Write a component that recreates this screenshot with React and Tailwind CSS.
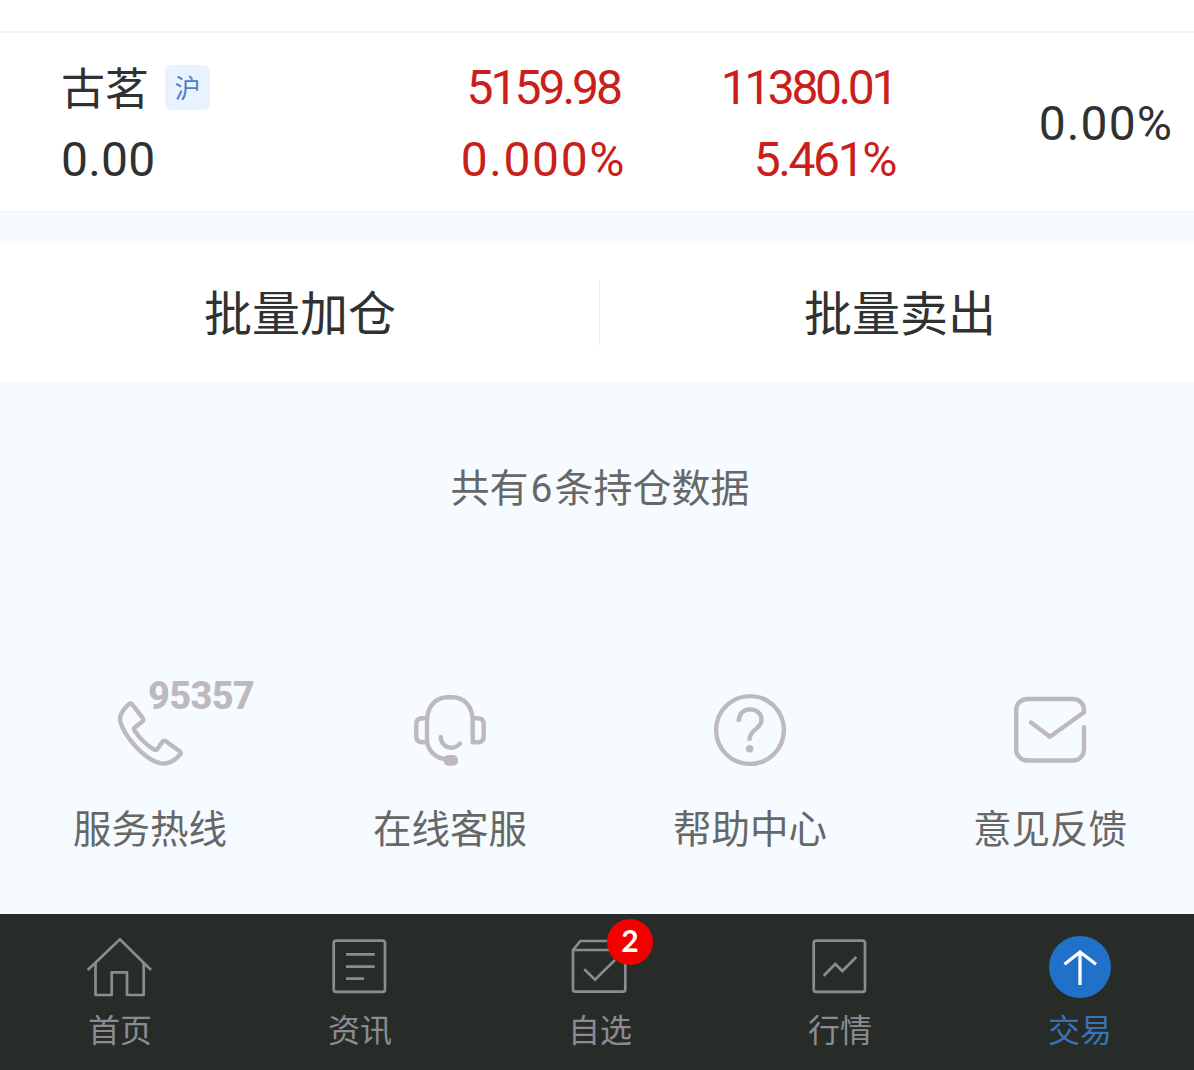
const services = [
	{ label: "服务热线", icon: <PhoneIcon />, tag: "95357" },
	{ label: "在线客服", icon: <HeadsetIcon /> },
	{ label: "帮助中心", icon: <HelpIcon /> },
	{ label: "意见反馈", icon: <MailIcon /> },
]

const tabs = [
	{ label: "首页", icon: <HomeIcon /> },
	{ label: "资讯", icon: <NewsIcon /> },
	{ label: "自选", icon: <WatchlistIcon />, badge: 2 },
	{ label: "行情", icon: <MarketIcon /> },
	{ label: "交易", icon: <TradeIcon />, active: true },
]

function ServiceSvg({ children }) {
	return (
		<svg
			className="w-24 h-24"
			viewBox="0 0 96 96"
			fill="none"
			stroke="#bdb9bd"
			strokeWidth="4.4"
			strokeLinecap="round"
			strokeLinejoin="round"
		>
			{children}
		</svg>
	)
}

function PhoneIcon() {
	return (
		<ServiceSvg>
			<path d="M26.8 22.2Q28.6 20.4 30.2 22.4L40.8 36.2Q42 38 40.4 39.4L33 45.2Q31.4 46.4 32.4 48.4C38 57 46 64 52.2 67.6Q54.4 68.6 55.8 66.6L60.4 59.8Q61.8 58 63.8 59.2L77.6 69.2Q79.6 71 78 72.8C72 79.4 66 83 57.6 81.2 40 76 21 52 18 38.4 17.4 32 21.6 27.4 26.8 22.2Z" />
		</ServiceSvg>
	)
}

function HeadsetIcon() {
	return (
		<ServiceSvg>
			<path d="M46 77.3C33 77 25 68 25 57V39C25 24 34 15.3 46 15.3H50C62 15.3 70.7 24 70.7 39V60.3H75.7Q81.7 60.3 81.7 54.3V42.3Q81.7 36.3 75.7 36.3H71" />
			<path d="M25 36.3H20.3Q14.3 36.3 14.3 42.3V54.3Q14.3 60.3 20.3 60.3H25" />
			<path d="M38.7 55C39 61 43 65.7 49 65.7 53 65.7 56 64 58 61.5" />
			<rect
				x="41.7"
				y="73"
				width="14.3"
				height="10.7"
				rx="5"
				fill="#bdb9bd"
				stroke="none"
			/>
		</ServiceSvg>
	)
}

function HelpIcon() {
	return (
		<ServiceSvg>
			<circle cx="48" cy="48" r="33.9" />
			<path
				d="M36.7 39.7C36.7 32 41 27.4 48 27.4 55 27.4 59.5 32 59.5 38 59.5 47 47.4 47 47.4 58.7"
				strokeLinecap="butt"
			/>
			<circle cx="47.7" cy="66.7" r="3.8" fill="#bdb9bd" stroke="none" />
		</ServiceSvg>
	)
}

function MailIcon() {
	return (
		<ServiceSvg>
			<path d="M82 45.3V67.5A11 11 0 0 1 71 78.5H25.2A11 11 0 0 1 14.2 67.5V28A11 11 0 0 1 25.2 17H71C77 17 82 21.5 82 28V30.3L47.9 54.8 29 40.5" />
		</ServiceSvg>
	)
}

function TabSvg({ children }) {
	return (
		<svg
			className="w-[72px] h-[72px]"
			viewBox="0 0 72 72"
			fill="none"
			stroke="#8b8b92"
			strokeWidth="2.7"
			strokeLinejoin="round"
		>
			{children}
		</svg>
	)
}

function HomeIcon() {
	return (
		<TabSvg>
			<path d="M3.7 40 35.9 9.3 67 40" strokeLinejoin="miter" />
			<path d="M11.5 33V65H27.7V42.3H43V65H59.7V33" />
		</TabSvg>
	)
}

function NewsIcon() {
	return (
		<TabSvg>
			<rect x="9.7" y="10.7" width="51.3" height="51.2" rx="2.5" />
			<path d="M22 24.3H50.7M22 36.7H50.7M22 48.7H40" />
		</TabSvg>
	)
}

function WatchlistIcon() {
	return (
		<TabSvg>
			<path d="M9 20 16.3 11H54L61.3 20V59.2Q61.3 61.7 58.8 61.7H11.5Q9 61.7 9 59.2ZM9 20H61" />
			<path d="M20.3 39.3 31 49.7 51 30" strokeLinejoin="miter" />
		</TabSvg>
	)
}

function MarketIcon() {
	return (
		<TabSvg>
			<rect x="9.7" y="10.7" width="51.3" height="51.2" rx="2.5" />
			<path
				d="M19.7 45.7 31.3 34 38.3 41 52.3 27"
				strokeLinejoin="miter"
			/>
		</TabSvg>
	)
}

function TradeIcon() {
	return (
		<TabSvg>
			<circle cx="36" cy="37" r="31" fill="#1f72c8" stroke="none" />
			<path
				d="M20.5 34.3 36 22 52 34.3M36 22V55"
				stroke="#fff"
				strokeWidth="3.3"
				strokeLinejoin="miter"
			/>
		</TabSvg>
	)
}

const Holding = () => {
	return (
		<div className="flex h-[182px] border-t-2 border-b-2 border-[#f3f4f5] bg-white font-[Roboto] text-[48px] leading-[72px] text-[#303131]">
			<div className="w-[324px] pl-[61px] pt-[19px]">
				<div className="flex items-center h-[72px]">
					<span className="-mt-1 font-['Noto_Sans_CJK_SC'] text-[44px]">
						古茗
					</span>
					<span className="flex items-center justify-center ml-4 -mt-0.5 w-[45px] h-[45px] rounded-md bg-[#ebf2ff] font-['Noto_Sans_CJK_SC'] text-[26px] text-[#4583c8]">
						沪
					</span>
				</div>
				<div className="tracking-[0.2px]">0.00</div>
			</div>
			<div className="w-[302px] pt-[19px] text-right text-[#c9201b]">
				<div className="pr-[6px] tracking-[-3px]">5159.98</div>
				<div className="tracking-[1.6px]">0.000%</div>
			</div>
			<div className="w-[272px] pt-[19px] text-right text-[#c9201b]">
				<div className="pr-[3px] tracking-[-3.4px]">11380.01</div>
				<div className="pr-[3px] tracking-[-2.4px]">5.461%</div>
			</div>
			<div className="flex items-center justify-end w-[275px] pt-1">
				<span className="tracking-[1.1px]">0.00%</span>
			</div>
		</div>
	)
}

const App = () => {
	return (
		<div className="w-full h-[1070px] overflow-hidden bg-[#f6fbff] font-['Noto_Sans_CJK_SC',sans-serif]">
			<div className="flex flex-col w-[1200px] h-full">
				<div className="h-[31px] bg-white" />
				<Holding />

				<div className="flex items-center mt-[30px] h-[139px] bg-white text-[48px] text-[#303131]">
					<button className="flex-1 pb-[5px] text-center">
						批量加仓
					</button>
					<div className="-ml-px w-px h-16 bg-[#eceded]" />
					<button className="flex-1 pb-[5px] text-center">
						批量卖出
					</button>
				</div>

				<div className="mt-[73px] h-[60px] leading-[60px] text-center text-[39px] text-[#666766]">
					共有
					<span className="px-[2px] font-[Roboto]">6</span>
					条持仓数据
				</div>

				<div className="grid grid-cols-4 mt-[167px]">
					{services.map((item) => (
						<div
							key={item.label}
							className="relative flex flex-col items-center"
						>
							{item.icon}
							{item.tag && (
								<span className="absolute left-[148px] -top-[8px] font-[Roboto] font-extrabold text-[38px] leading-[44px] tracking-[-0.7px] text-[#bdb9bd]">
									{item.tag}
								</span>
							)}
							<span className="mt-[18px] text-[38.5px] leading-[60px] text-[#666766]">
								{item.label}
							</span>
						</div>
					))}
				</div>

				<nav className="grid grid-cols-5 mt-auto h-[156px] pt-4 bg-[#282c29]">
					{tabs.map((tab) => (
						<div
							key={tab.label}
							className="relative flex flex-col items-center"
						>
							{tab.icon}
							{tab.badge && (
								<span className="absolute left-[127px] -top-[11px] flex items-center justify-center pb-1 w-[46px] h-[46px] rounded-full bg-[#f40000] font-[Lato] font-bold text-[30px] text-white">
									{tab.badge}
								</span>
							)}
							<span
								className={`mt-[3px] text-[32px] leading-[46px] ${
									tab.active
										? "text-[#3773b8]"
										: "text-[#8b8b92]"
								}`}
							>
								{tab.label}
							</span>
						</div>
					))}
				</nav>
			</div>
		</div>
	)
}

export default App
